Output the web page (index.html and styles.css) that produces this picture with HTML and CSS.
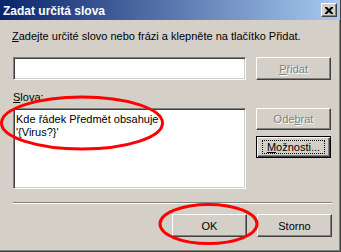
FILE: index.html
```html
<!DOCTYPE html>
<html>
<head>
<meta charset="utf-8">
<link rel="stylesheet" href="styles.css">
</head>
<body>
<div class="window">
  <div class="titlebar">
    <span class="title">Zadat určitá slova</span>
    <span class="close"><svg width="8" height="7" viewBox="0 0 8 7"><path d="M0 0h2l2 2 2-2h2v1l-2.5 2.5L8 6v1H6L4 5 2 7H0V6l2.5-2.5L0 1z" fill="#000"/></svg></span>
  </div>
  <div class="content">
    <div class="prompt"><u>Z</u>adejte určité slovo nebo frázi a klepněte na tlačítko Přidat.</div>
    <div class="row">
      <div class="field input"></div>
      <div class="btn disabled"><span><u>P</u>řidat</span></div>
    </div>
    <div class="label"><u>S</u>lova:</div>
    <div class="row">
      <div class="field list">
        <div class="item">Kde řádek Předmět obsahuje</div>
        <div class="item">'{Virus?}'</div>
      </div>
      <div class="side">
        <div class="btn disabled"><span>Ode<u>b</u>rat</span></div>
        <div class="btn focused"><span class="focus"><u>M</u>ožnosti...</span></div>
      </div>
    </div>
    <div class="separator"></div>
    <div class="footer">
      <div class="btn">OK</div>
      <div class="btn">Storno</div>
    </div>
  </div>
  <svg class="annot" width="341" height="252" viewBox="0 0 341 252">
    <ellipse cx="82" cy="123" rx="80.5" ry="26" fill="none" stroke="#ff0000" stroke-width="3"/>
    <ellipse cx="208.5" cy="224" rx="48.5" ry="19.5" fill="none" stroke="#ff0000" stroke-width="3"/>
  </svg>
</div>
</body>
</html>
```
FILE: styles.css
```css
html, body {
  margin: 0;
  padding: 0;
  background: #d4d0c8;
}
.window {
  position: relative;
  width: 341px;
  height: 252px;
  box-sizing: border-box;
  background: #d4d0c8;
  border-right: 1px solid #404040;
  border-bottom: 1px solid #404040;
  box-shadow: inset -1px -1px #808080;
  font-family: "Liberation Sans", Arial, sans-serif;
  font-size: 11px;
  color: #000;
  overflow: hidden;
}
.titlebar {
  height: 20px;
  background: linear-gradient(to right, #0a246a, #a6caf0);
  display: flex;
  align-items: center;
  justify-content: space-between;
  padding: 0 3px 0 3px;
}
.title {
  color: #fff;
  font-weight: bold;
  font-size: 12px;
  padding-top: 1px;
}
.close {
  width: 16px;
  height: 14px;
  box-sizing: border-box;
  background: #d4d0c8;
  border: 1px solid;
  border-color: #fff #404040 #404040 #fff;
  box-shadow: inset -1px -1px #808080;
  display: flex;
  align-items: center;
  justify-content: center;
}
.content {
  padding: 0 9px 0 13px;
}
.prompt {
  margin-top: 10px;
  margin-left: -1px;
  height: 13px;
  line-height: 13px;
}
.row {
  display: flex;
  gap: 10px;
  align-items: flex-start;
}
.prompt + .row {
  margin-top: 14px;
}
.field {
  box-sizing: border-box;
  width: 234px;
  background: #fff;
  border: 1px solid;
  border-color: #808080 #fff #fff #808080;
  box-shadow: inset 1px 1px #404040, inset -1px -1px #d4d0c8;
}
.input {
  height: 23px;
}
.list {
  height: 81px;
  padding: 4px 2px;
}
.item {
  height: 13px;
  line-height: 13px;
}
.label {
  margin-top: 11px;
  height: 13px;
  line-height: 13px;
  margin-bottom: 4px;
}
.btn {
  box-sizing: border-box;
  width: 75px;
  height: 23px;
  border: 1px solid;
  border-color: #fff #404040 #404040 #fff;
  box-shadow: inset -1px -1px #808080;
  display: flex;
  align-items: center;
  justify-content: center;
  background: #d4d0c8;
}
.btn.disabled {
  color: #808080;
  text-shadow: 1px 1px #fff;
}
.side {
  display: flex;
  flex-direction: column;
  gap: 6px;
}
.side .btn {
  height: 22px;
}
.btn.focused {
  border: 1px solid #000;
  box-shadow: inset 1px 1px #fff, inset -1px -1px #404040, inset -2px -2px #808080;
}
.focus {
  border: 1px dotted #000;
  width: 61px;
  height: 12px;
  line-height: 12px;
  text-align: center;
}
.separator {
  margin-top: 13px;
  width: 319px;
  height: 1px;
  border-bottom: 1px solid #fff;
  background: #808080;
}
.footer {
  margin-top: 10px;
  display: flex;
  justify-content: flex-end;
  gap: 10px;
  width: 319px;
}
.annot {
  position: absolute;
  left: 0;
  top: 0;
  pointer-events: none;
}
```
